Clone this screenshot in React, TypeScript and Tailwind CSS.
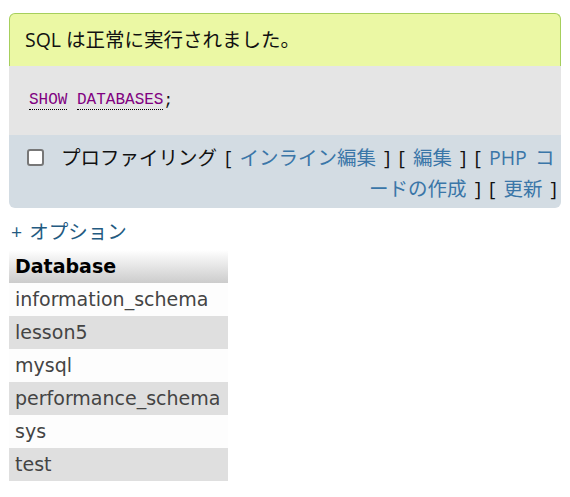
import React from "react";

const jp = { fontFamily: '"Open Sans", "Noto Sans CJK JP", sans-serif' };

export default function App() {
  const rows = ["information_schema", "lesson5", "mysql", "performance_schema", "sys", "test"];
  return (
    <div className="w-[570px] h-[497px] overflow-hidden bg-white pt-[13px]" style={jp}>
      <div className="mx-[9px] w-[552px]">
        <div className="h-[53px] rounded-t-[6px] border border-b-0 border-[#a6cf5c] bg-[#ebf8a4] pl-[15px] flex items-center text-[19.5px] text-[#111]">
          SQL は正常に実行されました。
        </div>
        <div className="h-[69px] bg-[#e5e5e5] pl-[20px] flex items-center text-[16px] text-[#800080]" style={{ fontFamily: '"Liberation Mono", monospace' }}>
          <span className="border-b border-dotted border-black leading-[18px]">SHOW</span>
          <span>&nbsp;</span>
          <span className="border-b border-dotted border-black leading-[18px]">DATABASES</span>
          <span className="text-[#111]">;</span>
        </div>
        <div className="h-[73px] rounded-b-[6px] bg-[#d3dce3] pt-[7px] pr-[4px] text-[19.5px] text-[#111] leading-[31px]">
          <div className="flex items-center whitespace-nowrap">
            <span className="ml-[18px] mr-[17px] w-[17px] h-[17px] rounded-[3px] border-2 border-[#777] bg-white inline-block shrink-0" />
            <span className="[word-spacing:3px]">
              プロファイリング [ <span className="text-[#3a76a8]">インライン編集</span> ] [ <span className="text-[#3a76a8]">編集</span> ] [ <span className="text-[#3a76a8]">PHP コ</span>
            </span>
          </div>
          <div className="text-right whitespace-nowrap [word-spacing:3px]">
            <span className="text-[#3a76a8]">ードの作成</span> ] [ <span className="text-[#3a76a8]">更新</span> ]
          </div>
        </div>
      </div>
      <div className="mt-[11px] ml-[11px] text-[19.5px] text-[#235a81] leading-[26px] [word-spacing:2px]">+ オプション</div>
      <div className="ml-[9px] mt-[5px] w-[219px] text-[19px]" style={{ fontFamily: '"DejaVu Sans", sans-serif' }}>
        <div className="h-[33px] flex items-center pl-[6px] font-bold text-black bg-gradient-to-b from-white to-[#cccccc]">Database</div>
        {rows.map((r, i) => (
          <div key={r} className={`h-[33px] flex items-center pl-[6px] text-[#444] ${i % 2 === 1 ? "bg-[#dfdfdf]" : "bg-[#fdfdfd]"}`}>
            {r}
          </div>
        ))}
      </div>
    </div>
  );
}
